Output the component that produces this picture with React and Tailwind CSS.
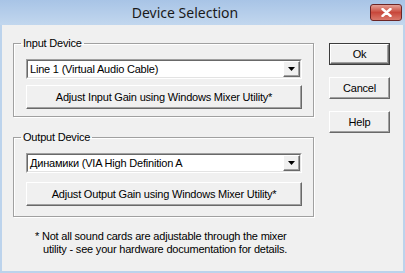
import clsx from 'clsx';

function Raised({ children, className }) {
  return (
    <div
      className={clsx(
        'flex items-center justify-center bg-[#f0f0f0] border border-t-white border-l-white border-b-[#696969] border-r-[#696969] shadow-[inset_-1px_-1px_0_#a0a0a0]',
        className
      )}
    >
      {children}
    </div>
  );
}

function Combo({ value }) {
  return (
    <div className="h-[20px] flex border border-t-[#a0a0a0] border-l-[#a0a0a0] border-b-white border-r-white">
      <div className="flex-1 flex border border-t-[#696969] border-l-[#696969] border-b-[#e3e3e3] border-r-[#e3e3e3] bg-white">
        <div className="flex-1 pl-[2px] leading-[16px] whitespace-nowrap overflow-hidden">{value}</div>
        <Raised className="w-[17px]">
          <svg width="7" height="4" viewBox="0 0 7 4">
            <path d="M0 0 H7 L3.5 4 Z" fill="black" />
          </svg>
        </Raised>
      </div>
    </div>
  );
}

function Group({ label, value, action, className, gap, bottom }) {
  return (
    <fieldset
      className={clsx(
        'border border-[#a0a0a0] shadow-[1px_1px_0_white,inset_1px_1px_0_white] pl-[12px] pr-[11px]',
        bottom,
        className
      )}
    >
      <legend className="-ml-[5px] px-[2px] leading-[13px]">{label}</legend>
      <div className="pt-[9px]">
        <Combo value={value} />
        <Raised className={clsx('h-[24px]', gap)}>{action}</Raised>
      </div>
    </fieldset>
  );
}

export default function App() {
  return (
    <div className="w-[405px] h-[273px] flex flex-col bg-[#bcd3ec] font-['Liberation_Sans',Arial,sans-serif] text-[11px] tracking-[-0.2px] text-black overflow-hidden">
      <div className="h-[25px] flex bg-gradient-to-b from-[#a8c4e6] to-[#c2d7ee]">
        <div className="flex-1 text-center font-['Noto_Sans',sans-serif] text-[14px] tracking-normal leading-[25px] text-[#1a1a1a]">
          Device Selection
        </div>
        <div className="mt-[4px] mr-[3px] w-[32px] h-[17px] rounded-[3px] border border-[#6b2525] bg-gradient-to-b from-[#e3a096] via-[#c8473b] to-[#d9786b] flex items-center justify-center">
          <svg width="11" height="9" viewBox="0 0 11 9">
            <path d="M1.5 1 L9.5 8 M9.5 1 L1.5 8" stroke="white" strokeWidth="2.4" strokeLinecap="round" />
          </svg>
        </div>
      </div>

      <div className="flex-1 mx-[2px] mb-[2px] bg-[#f0f0f0] flex pl-[11px]">
        <div className="w-[301px] pt-[12px]">
          <Group
            label="Input Device"
            value="Line 1 (Virtual Audio Cable)"
            action="Adjust Input Gain using Windows Mixer Utility*"
            gap="mt-[6px]"
            bottom="pb-[7px]"
          />
          <Group
            className="mt-[14px]"
            label="Output Device"
            value="Динамики (VIA High Definition A"
            action="Adjust Output Gain using Windows Mixer Utility*"
            gap="mt-[9px]"
            bottom="pb-[10px]"
          />
          <div className="mt-[13px] pl-[22px] leading-[13px]">
            <div>* Not all sound cards are adjustable through the mixer</div>
            <div className="pl-[8px]">utility - see your hardware documentation for details.</div>
          </div>
        </div>

        <div className="ml-[15px] pt-[18px] flex flex-col gap-[12px]">
          <div className="border border-[#3c3c3c]">
            <Raised className="w-[59px] h-[20px]">Ok</Raised>
          </div>
          <Raised className="w-[61px] h-[22px]">Cancel</Raised>
          <Raised className="w-[61px] h-[22px]">Help</Raised>
        </div>
      </div>
    </div>
  );
}
